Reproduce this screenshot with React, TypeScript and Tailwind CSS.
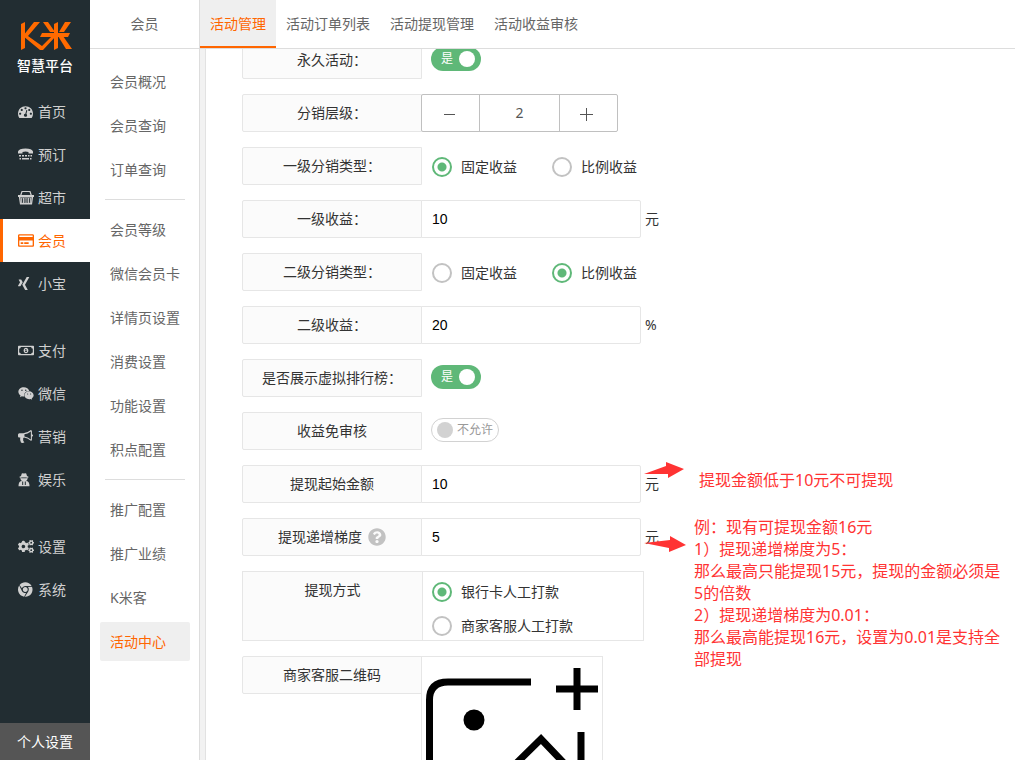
import { useState } from 'react';
import type { ReactNode, SVGProps } from 'react';
import {
    FaChrome,
    FaCogs,
    FaQuestionCircle,
    FaRegCreditCard,
    FaRegMoneyBillAlt,
    FaWeixin,
    FaXing,
} from 'react-icons/fa';

function DashboardIcon(props: SVGProps<SVGSVGElement>) {
    return (
        <svg viewBox="0 0 1792 1792" fill="currentColor" {...props}>
            <path d="M384 1152q0-53-37.5-90.5t-90.5-37.5-90.5 37.5-37.5 90.5 37.5 90.5 90.5 37.5 90.5-37.5 37.5-90.5zm192-448q0-53-37.5-90.5t-90.5-37.5-90.5 37.5-37.5 90.5 37.5 90.5 90.5 37.5 90.5-37.5 37.5-90.5zm428 481l101-382q6-26-7.5-48.5t-38.5-29.5-48 6.5-30 39.5l-101 382q-60 5-107 43.5t-63 98.5q-20 77 20 146t117 89 146-20 89-117q16-60-6-117t-72-91zm660-33q0-53-37.5-90.5t-90.5-37.5-90.5 37.5-37.5 90.5 37.5 90.5 90.5 37.5 90.5-37.5 37.5-90.5zm-640-640q0-53-37.5-90.5t-90.5-37.5-90.5 37.5-37.5 90.5 37.5 90.5 90.5 37.5 90.5-37.5 37.5-90.5zm448 192q0-53-37.5-90.5t-90.5-37.5-90.5 37.5-37.5 90.5 37.5 90.5 90.5 37.5 90.5-37.5 37.5-90.5zm320 448q0 261-141 483-19 29-54 29h-1402q-35 0-54-29-141-221-141-483 0-182 71-348t191-286 286-191 348-71 348 71 286 191 191 286 71 348z" />
        </svg>
    );
}

function PhoneIcon(props: SVGProps<SVGSVGElement>) {
    return (
        <svg viewBox="0 0 15 15" fill="currentColor" {...props}>
            <path d="M0 6.5V4.5Q1 1.5 7.5 1.5T15 4.5V6.500H10.500V5Q7.500 4 4.500 5V6.500z" />
            <path d="M1 8h2v1.600H1zM4 8h2v1.600H4zM7 8h2v1.600H7zM10 8h1.500v1.600H10zM12.500 8h1.500v1.600h-1.500z" />
            <path d="M1.500 11h1.500v1.600H1.500zM4 11h7v1.600H4zM12 11h1.500v1.600H12z" />
        </svg>
    );
}

function BasketIcon(props: SVGProps<SVGSVGElement>) {
    return (
        <svg viewBox="0 0 16 15" fill="none" stroke="currentColor" {...props}>
            <path d="M2.500 6 4 1.500h8L13.500 6" strokeWidth="1.200" />
            <path d="M0 6h16" strokeWidth="2" />
            <path d="M1.500 7h13l-1 7h-11zm3 1.500v4M7 8.500v4M9 8.500v4M11.500 8.500v4" strokeWidth="1.200" />
            <path d="M2.500 13.500h11" />
            <path d="M3.200 8v5M5.700 8v5M8 8v5M10.300 8v5M12.800 8v5" strokeWidth="1.200" />
            <path d="M4.500 8.500v4M7 8.500v4M9 8.500v4M11.500 8.500v4" stroke="#222d32" strokeWidth="0.900" />
        </svg>
    );
}

function BullhornIcon(props: SVGProps<SVGSVGElement>) {
    return (
        <svg viewBox="0 0 1792 1792" fill="currentColor" {...props}>
            <path d="M1664 640q53 0 90.5 37.5t37.5 90.5-37.5 90.5-90.5 37.5v384q0 52-38 90t-90 38q-417-347-812-380-58 19-91 66t-31 100.5 40 92.5q-20 33-23 65.5t6 58 33.5 55 48 50 61.5 50.5q-29 58-111.5 83t-168.5 11.5-132-55.5q-7-23-29.5-87.5t-32-94.5-23-89-15-101 3.5-98.5 22-110.5h-122q-66 0-113-47t-47-113v-192q0-66 47-113t113-47h480q435 0 896-384 52 0 90 38t38 90v384zm-128 604v-954q-394 302-768 343v270q377 42 768 341z" />
        </svg>
    );
}

function AgentIcon(props: SVGProps<SVGSVGElement>) {
    return (
        <svg viewBox="0 0 12 15" fill="currentColor" {...props}>
            <path d="M3 4 3.800 1.500Q4.500 1 6 1.500 7.500 1 8.200 1.500L9 4l1.500.8v.8H9.500V7Q9 8.500 8 9l1.500.2q2 1 2 5H.5q0-4 2-5L4 9Q3 8.500 2.500 7V5.600H1.500v-.8z" />
            <path d="M3.200 5.800h5.600" stroke="#222d32" strokeWidth="0.800" />
            <path d="M4.700 9.500v3.500M7.300 9.500v3.500" stroke="#222d32" />
        </svg>
    );
}

const navGroups = [
    [
        { label: '首页', icon: DashboardIcon },
        { label: '预订', icon: PhoneIcon },
        { label: '超市', icon: BasketIcon },
        { label: '会员', icon: FaRegCreditCard, active: true },
        { label: '小宝', icon: FaXing },
    ],
    [
        { label: '支付', icon: FaRegMoneyBillAlt },
        { label: '微信', icon: FaWeixin },
        { label: '营销', icon: BullhornIcon },
        { label: '娱乐', icon: AgentIcon },
    ],
    [
        { label: '设置', icon: FaCogs },
        { label: '系统', icon: FaChrome },
    ],
] as { label: string; icon: typeof DashboardIcon; active?: boolean }[][];

const menuGroups = [
    ['会员概况', '会员查询', '订单查询'],
    ['会员等级', '微信会员卡', '详情页设置', '消费设置', '功能设置', '积点配置'],
    ['推广配置', '推广业绩', 'K米客', '活动中心'],
];

const tabs = ['活动管理', '活动订单列表', '活动提现管理', '活动收益审核'];

function Sidebar() {
    return (
        <aside className="flex w-[90px] shrink-0 flex-col bg-[#222d32]">
            <div className="flex h-[90px] flex-col items-center pt-5">
                <svg className="h-8 w-[54px]" viewBox="0 0 54 32" fill="#ff6a00">
                    <path d="M3 4 7 2V28L3 30z" />
                    <path d="M16 2h6L10 16 24 26 34 16h4L25 30h-3L5 16z" />
                    <path d="M25 2h5l7 10h-5z" />
                    <path d="M24 13h28l-2 4H22z" />
                    <path d="M36 4l4-2v26l-4 2z" />
                    <path d="M47 2h6l-7 10h-5z" />
                    <path d="M40 16h5l9 13h-6z" />
                </svg>
                <span className="mt-1 text-sm leading-5 font-medium text-white">智慧平台</span>
            </div>
            <nav className="flex flex-col gap-6">
                {navGroups.map((group) => (
                    <div key={group[0].label}>
                        {group.map(({ label, icon: Icon, active }) => (
                            <a
                                key={label}
                                href="#"
                                className={
                                    active
                                        ? 'flex h-[43px] items-center gap-1 border-l-3 border-[#ff6600] bg-white pl-[15px] text-[#ff6600]'
                                        : 'flex h-[43px] items-center gap-1 border-l-3 border-transparent pl-[15px] text-[#d0d0d0]'
                                }
                            >
                                <Icon className="h-[15px] w-4 shrink-0" preserveAspectRatio="xMinYMid meet" />
                                {label}
                            </a>
                        ))}
                    </div>
                ))}
            </nav>
            <a href="#" className="mt-auto flex h-[37px] items-center justify-center bg-[#555555] text-white">
                个人设置
            </a>
        </aside>
    );
}

function SubMenu() {
    return (
        <aside className="w-[110px] shrink-0 border-r border-[#dddddd]">
            <h2 className="flex h-[49px] items-center justify-center border-b border-[#dddddd] text-[#666666]">会员</h2>
            <nav className="mt-[13px]">
                {menuGroups.map((group, index) => (
                    <div key={group[0]}>
                        {index > 0 && <hr className="my-2.5 mr-3.5 ml-[15px] border-[#dddddd]" />}
                        <div className="mr-[9px] ml-2.5 flex flex-col gap-[5px]">
                            {group.map((label) => (
                                <a
                                    key={label}
                                    href="#"
                                    className={
                                        label === '活动中心'
                                            ? 'flex h-[39px] items-center rounded-xs bg-[#efefef] pl-2.5 whitespace-nowrap text-[#ff6600]'
                                            : 'flex h-[39px] items-center pl-2.5 whitespace-nowrap text-[#666666]'
                                    }
                                >
                                    {label}
                                </a>
                            ))}
                        </div>
                    </div>
                ))}
            </nav>
        </aside>
    );
}

function Row({ label, htmlFor, children }: { label: ReactNode; htmlFor?: string; children: ReactNode }) {
    return (
        <div className="relative flex items-start">
            <label
                htmlFor={htmlFor}
                className="flex h-[38px] w-[180px] shrink-0 items-center justify-center gap-1.5 rounded-l-xs border border-[#e6e6e6] bg-[#fbfbfb]"
            >
                {label}
            </label>
            {children}
        </div>
    );
}

function Switch({ id, checked, onChange }: { id: string; checked: boolean; onChange: () => void }) {
    return (
        <button
            id={id}
            type="button"
            role="switch"
            aria-checked={checked}
            onClick={onChange}
            className={
                checked
                    ? 'mt-1.5 ml-[9px] flex h-6 cursor-pointer items-center gap-1.5 rounded-full bg-[#5fb878] pr-1.5 pl-2.5 text-xs text-white'
                    : 'mt-1.5 ml-[9px] flex h-6 cursor-pointer flex-row-reverse items-center gap-1 rounded-full border border-[#d2d2d2] px-[5px] text-xs text-[#999999]'
            }
        >
            {checked ? '是' : '不允许'}
            <span className={checked ? 'size-4 rounded-full bg-white' : 'size-4 rounded-full bg-[#d2d2d2]'} />
        </button>
    );
}

function Radio({ name, label, defaultChecked }: { name: string; label: string; defaultChecked?: boolean }) {
    return (
        <label className="flex h-5 cursor-pointer items-center gap-[9px]">
            <input
                type="radio"
                name={name}
                defaultChecked={defaultChecked}
                className="size-5 appearance-none rounded-full border-2 border-[#c2c2c2] bg-white checked:border-[#5fb878] checked:bg-[radial-gradient(circle,#5fb878_4px,#ffffff_5px)]"
            />
            {label}
        </label>
    );
}

function TypeRow({ name, label, percent }: { name: string; label: string; percent?: boolean }) {
    return (
        <Row label={label}>
            <div className="mt-2.5 ml-2.5 flex gap-[35px]">
                <Radio name={name} label="固定收益" defaultChecked={!percent} />
                <Radio name={name} label="比例收益" defaultChecked={percent} />
            </div>
        </Row>
    );
}

function InputRow({
    id,
    label,
    value,
    unit,
    children,
}: {
    id: string;
    label: ReactNode;
    value: string;
    unit: string;
    children?: ReactNode;
}) {
    return (
        <Row label={label} htmlFor={id}>
            <input
                id={id}
                type="text"
                defaultValue={value}
                className="-ml-px h-[38px] w-[220px] rounded-r-xs border border-[#e6e6e6] bg-white px-2.5 font-['Liberation_Sans',sans-serif] text-black outline-none"
            />
            <span className="ml-1 leading-[38px]">{unit}</span>
            {children}
        </Row>
    );
}

function Stepper() {
    const [level, setLevel] = useState(2);

    return (
        <div className="-ml-px flex h-[38px] divide-x divide-[#c0c0c0] rounded-xs border border-[#c0c0c0] bg-white text-[#555555]">
            <button
                type="button"
                aria-label="减少"
                onClick={() => setLevel(Math.max(1, level - 1))}
                className="flex w-[58px] cursor-pointer items-center justify-center pr-1"
            >
                <svg className="size-4" viewBox="0 0 16 16" stroke="currentColor">
                    <path d="M3 9.500h11" />
                </svg>
            </button>
            <input
                id="level"
                value={level}
                onChange={(e) => setLevel(Number(e.target.value) || 1)}
                className="w-20 text-center outline-none"
            />
            <button
                type="button"
                aria-label="增加"
                onClick={() => setLevel(level + 1)}
                className="flex w-[57px] cursor-pointer items-center justify-center pr-1"
            >
                <svg className="size-4" viewBox="0 0 16 16" stroke="currentColor">
                    <path d="M1 9.500h13M7.500 3v13" />
                </svg>
            </button>
        </div>
    );
}

function UploadIcon() {
    return (
        <svg className="size-[180px]" viewBox="0 0 180 180" fill="none" stroke="#000000" strokeWidth="7">
            <path d="M109 25H26Q7.500 25 7.500 43V137Q7.500 155 26 155H141Q159 155 159 137V75" />
            <path d="M134 32h42M155 11v42" />
            <circle cx="52" cy="63" r="10.5" fill="#000000" stroke="none" />
            <path d="M62 138l57-56 40 42" />
        </svg>
    );
}

export default function App() {
    const [forever, setForever] = useState(true);
    const [ranking, setRanking] = useState(true);
    const [skipAudit, setSkipAudit] = useState(false);

    return (
        <div className="flex h-screen overflow-hidden bg-white font-['Noto_Sans','Noto_Sans_CJK_SC',sans-serif] text-sm leading-5 text-[#333333]">
            <Sidebar />
            <SubMenu />
            <main className="flex min-w-0 flex-1 flex-col">
                <nav className="flex h-[49px] shrink-0 border-b border-[#dddddd]">
                    {tabs.map((tab, index) => (
                        <a
                            key={tab}
                            href="#"
                            className={
                                index === 0
                                    ? 'flex items-center border-y-2 border-t-transparent border-b-[#ff6600] bg-[#efefef] px-2.5 text-[#ff6600]'
                                    : 'flex items-center px-2.5 text-[#666666]'
                            }
                        >
                            {tab}
                        </a>
                    ))}
                </nav>
                <div className="min-h-0 flex-1 border-l-5 border-[#f2f2f2]">
                    <div className="h-full overflow-hidden border-l border-[#e2e2e2] pl-9">
                        <form className="-mt-2 flex flex-col gap-[15px]">
                            <Row label="永久活动：" htmlFor="forever">
                                <Switch id="forever" checked={forever} onChange={() => setForever(!forever)} />
                            </Row>
                            <Row label="分销层级：" htmlFor="level">
                                <Stepper />
                            </Row>
                            <TypeRow name="type1" label="一级分销类型：" />
                            <InputRow id="income1" label="一级收益：" value="10" unit="元" />
                            <TypeRow name="type2" label="二级分销类型：" percent />
                            <InputRow id="income2" label="二级收益：" value="20" unit="%" />
                            <Row label="是否展示虚拟排行榜：" htmlFor="ranking">
                                <Switch id="ranking" checked={ranking} onChange={() => setRanking(!ranking)} />
                            </Row>
                            <Row label="收益免审核" htmlFor="audit">
                                <Switch id="audit" checked={skipAudit} onChange={() => setSkipAudit(!skipAudit)} />
                            </Row>
                            <InputRow id="minimum" label="提现起始金额" value="10" unit="元">
                                <svg className="absolute -top-1 left-[402px] h-5 w-11" viewBox="0 0 44 20" fill="#ff3333">
                                    <path d="M0 13 22 5V1l18 7-16 9v-4z" />
                                </svg>
                                <p className="absolute top-1 left-[457px] text-base leading-[22px] whitespace-nowrap text-[#ff3333]">
                                    提现金额低于10元不可提现
                                </p>
                            </InputRow>
                            <InputRow
                                id="step"
                                label={
                                    <>
                                        提现递增梯度
                                        <FaQuestionCircle className="size-[18px] text-[#c2c2c2]" />
                                    </>
                                }
                                value="5"
                                unit="元"
                            >
                                <svg className="absolute top-4 left-[402px] h-5 w-11" viewBox="0 0 44 20" fill="#ff3333">
                                    <path d="M0 9 26 6V2l16 9-17 7v-4z" />
                                </svg>
                                <p className="absolute -top-0.5 left-[452px] text-base leading-[22px] whitespace-nowrap text-[#ff3333]">
                                    例：现有可提现金额16元
                                    <br />
                                    1）提现递增梯度为5：
                                    <br />
                                    那么最高只能提现15元，提现的金额必须是
                                    <br />
                                    5的倍数
                                    <br />
                                    2）提现递增梯度为0.01：
                                    <br />
                                    那么最高能提现16元，设置为0.01是支持全
                                    <br />
                                    部提现
                                </p>
                            </InputRow>
                            <fieldset className="flex w-[402px] border border-[#e6e6e6]">
                                <span id="payout" className="w-[180px] border-r border-[#e6e6e6] bg-[#fbfbfb] text-center leading-9">
                                    提现方式
                                </span>
                                <div
                                    role="radiogroup"
                                    aria-labelledby="payout"
                                    className="flex flex-col gap-3.5 px-[9px] pt-2.5 pb-1"
                                >
                                    <Radio name="payout" label="银行卡人工打款" defaultChecked />
                                    <Radio name="payout" label="商家客服人工打款" />
                                </div>
                            </fieldset>
                            <Row label="商家客服二维码">
                                <button
                                    type="button"
                                    aria-label="上传二维码"
                                    className="-ml-px cursor-pointer border border-[#e6e6e6]"
                                >
                                    <UploadIcon />
                                </button>
                            </Row>
                        </form>
                    </div>
                </div>
            </main>
        </div>
    );
}
